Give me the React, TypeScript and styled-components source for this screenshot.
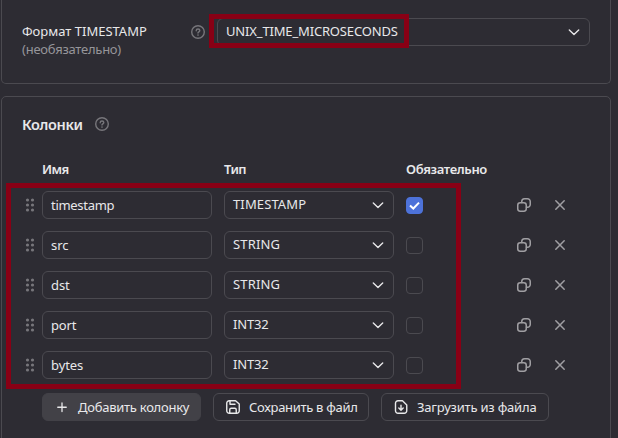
import React from "react";
import styled, { createGlobalStyle } from "styled-components";

const GlobalStyle = createGlobalStyle`
  *, *::before, *::after { box-sizing: border-box; }
  html, body { margin: 0; background: #2d2c33; overflow: hidden; }
  body { font-family: "Noto Sans", "Open Sans", sans-serif; font-size: 13px; line-height: 18px; color: #e8e8ea; }
  svg { display: block; flex: none; }
`;

const Page = styled.main`
  position: relative;
  width: 618px;
  height: 438px;
  overflow: hidden;
  padding-left: 1px;
  display: flex;
  flex-direction: column;
  gap: 12px;
`;

const Panel = styled.section<{ $place: "top" | "bottom" }>`
  width: 610px;
  flex: none;
  border: 1px solid #4b4a50;
  ${(p) =>
    p.$place === "top"
      ? "height: 84px; border-top: 0; border-radius: 0 0 5px 5px; padding: 18px 20px 0;"
      : "height: 350px; border-radius: 5px; padding: 18px 20px 0;"}
`;

const FormatRow = styled.div`
  display: flex;
  align-items: flex-start;
`;

const FieldLabel = styled.div`
  width: 168px;
  padding-top: 4px;
  white-space: nowrap;
`;

const Muted = styled.div`
  color: #96959a;
`;

const HelpSlot = styled.span`
  width: 27px;
  padding-top: 6px;
  color: #77767b;
`;

const Text = styled.span<{ $track?: number }>`
  letter-spacing: ${(p) => p.$track ?? 0}px;
  white-space: nowrap;
`;

const SelectBox = styled.button<{ $width: number }>`
  width: ${(p) => p.$width}px;
  height: 28px;
  padding: 0 7px 0 8px;
  display: flex;
  align-items: center;
  justify-content: space-between;
  border: 1px solid #4b4a50;
  border-radius: 6px;
  background: transparent;
  color: inherit;
  font: inherit;
  line-height: 24px;

  ${Text} { margin-bottom: 2px; }
`;

const Title = styled.h2`
  margin: 0;
  display: flex;
  height: 18px;
  gap: 11px;
  align-items: center;
  font-size: 14.5px;
  font-weight: 600;
  line-height: 18px;
  svg { color: #77767b; }
`;

const HeaderRow = styled.div`
  display: grid;
  grid-template-columns: 170px 170px 100px;
  column-gap: 12px;
  margin: 27px 0 0 20px;
  height: 18px;
  font-weight: 600;
`;

const Rows = styled.div`
  margin-top: 13px;
  display: flex;
  flex-direction: column;
  gap: 12px;
`;

const Row = styled.div`
  display: grid;
  grid-template-columns: 20px 182px 182px 110px 36px 16px;
  height: 28px;
  align-items: center;
`;

const NameField = styled.div`
  width: 170px;
  height: 28px;
  border: 1px solid #4b4a50;
  border-radius: 6px;
  padding: 1px 8px 0;
  line-height: 25px;
`;

const Check = styled.span<{ $on: boolean }>`
  width: 17px;
  height: 17px;
  border-radius: 4px;
  border: 1px solid ${(p) => (p.$on ? "#4d72d9" : "#4b4a50")};
  background: ${(p) => (p.$on ? "#4d72d9" : "transparent")};
  display: grid;
  place-items: center;
`;

const IconButton = styled.button`
  width: 16px;
  height: 16px;
  padding: 0;
  border: 0;
  background: none;
  color: #a09fa3;
`;

const Actions = styled.div`
  display: flex;
  gap: 12px;
  margin: 14px 0 0 20px;
`;

const Action = styled.button<{ $width: number; $filled?: boolean }>`
  width: ${(p) => p.$width}px;
  height: 28px;
  padding: 0 0 0 11px;
  display: flex;
  align-items: center;
  gap: 8px;
  border: 1px solid ${(p) => (p.$filled ? "#424147" : "#4b4a50")};
  border-radius: 6px;
  background: ${(p) => (p.$filled ? "#424147" : "transparent")};
  color: inherit;
  font: inherit;
`;

const Highlight = styled.div<{ $x: number; $y: number; $w: number; $h: number }>`
  position: absolute;
  left: ${(p) => p.$x}px;
  top: ${(p) => p.$y}px;
  width: ${(p) => p.$w}px;
  height: ${(p) => p.$h}px;
  border: 5px solid #880015;
  pointer-events: none;
`;

const stroke = { fill: "none", stroke: "currentColor", strokeLinecap: "round", strokeLinejoin: "round" } as const;

const Help = () => (
  <svg width="16" height="16" viewBox="0 0 16 16" {...stroke} strokeWidth="1.4">
    <circle cx="8" cy="8" r="6.3" />
    <path d="M6.2 6.7c0-1 .8-1.7 1.8-1.7s1.8.7 1.8 1.6C9.8 7.8 8 7.8 8 9" />
    <path d="M8 11v.1" strokeWidth="1.6" />
  </svg>
);
const Chevron = () => (
  <svg width="16" height="16" viewBox="0 0 16 16" {...stroke} strokeWidth="1.4">
    <path d="M3.3 6 8 10.400 12.700 6" />
  </svg>
);
const Grip = () => (
  <svg width="16" height="16" viewBox="0 0 16 16" fill="#77767b">
    {[3, 8, 13].map((y) => [5.5, 10.5].map((x) => <circle key={`${x}-${y}`} cx={x} cy={y} r="1.6" />))}
  </svg>
);
const Tick = () => (
  <svg width="11" height="11" viewBox="0 0 11 11" {...stroke} stroke="#fff" strokeWidth="2" strokeLinecap="butt" strokeLinejoin="miter">
    <path d="M1 5.5 4.3 8.5 10 2.6" />
  </svg>
);
const Copy = () => (
  <svg width="16" height="16" viewBox="0 0 16 16" {...stroke} strokeWidth="1.5">
    <rect x="1.75" y="5.75" width="8.5" height="8.5" rx="2.4" />
    <path d="M5.75 5.5V4.500a2.750 2.750 0 0 1 2.750-2.750h3a2.750 2.750 0 0 1 2.750 2.750v3a2.750 2.750 0 0 1-2.750 2.750H10.500" />
  </svg>
);
const Cross = () => (
  <svg width="16" height="16" viewBox="0 0 16 16" {...stroke} strokeWidth="1.5">
    <path d="m3.8 3.8 8.400 8.400m0-8.400-8.400 8.400" />
  </svg>
);
const Plus = () => (
  <svg width="16" height="16" viewBox="0 0 16 16" {...stroke} strokeWidth="1.3">
    <path d="M8 4v8.500M3.750 8.250h8.500" />
  </svg>
);
const Save = () => (
  <svg width="16" height="16" viewBox="0 0 16 16" {...stroke} strokeWidth="1.4">
    <path d="M4.25 1.75h6.3L14.25 5v6.75a2.5 2.5 0 0 1-2.5 2.5h-7.5a2.5 2.5 0 0 1-2.500-2.500v-7.500a2.500 2.500 0 0 1 2.500-2.500Z" />
    <path d="M5 2v3.250h5M4.750 14V10.750a1.500 1.500 0 0 1 1.500-1.500h3.500a1.500 1.500 0 0 1 1.500 1.500V14" />
  </svg>
);
const FileDown = () => (
  <svg width="16" height="16" viewBox="0 0 16 16" {...stroke} strokeWidth="1.4">
    <path d="M5 1.750h4.500L13.750 6v5.750a2.500 2.500 0 0 1-2.500 2.500h-6.250a2.500 2.500 0 0 1-2.500-2.500v-7.500A2.500 2.500 0 0 1 5 1.750Z" />
    <path d="M8 6.200v5M5.800 9 8 11.200 10.200 9" />
  </svg>
);

const Select = ({ value, width, track }: { value: string; width: number; track?: number }) => (
  <SelectBox $width={width}>
    <Text $track={track}>{value}</Text>
    <Chevron />
  </SelectBox>
);

const columns = [
  { name: "timestamp", type: "TIMESTAMP", required: true, nameTrack: -0.3, typeTrack: 0.12 },
  { name: "src", type: "STRING", required: false, nameTrack: -0.1, typeTrack: 0.15 },
  { name: "dst", type: "STRING", required: false, nameTrack: -0.1, typeTrack: 0.15 },
  { name: "port", type: "INT32", required: false, nameTrack: -0.2, typeTrack: -0.2 },
  { name: "bytes", type: "INT32", required: false, nameTrack: -0.1, typeTrack: -0.2 },
];

export default function App() {
  return (
    <>
      <GlobalStyle />
      <Page>
        <Panel $place="top">
          <FormatRow>
            <FieldLabel>
              <Text>Формат TIMESTAMP</Text>
              <Muted><Text $track={-0.25}>(необязательно)</Text></Muted>
            </FieldLabel>
            <HelpSlot><Help /></HelpSlot>
            <Select value="UNIX_TIME_MICROSECONDS" width={373} track={-0.16} />
          </FormatRow>
        </Panel>
        <Panel $place="bottom">
          <Title><Text $track={-0.35}>Колонки</Text><Help /></Title>
          <HeaderRow>
            <Text $track={-0.6}>Имя</Text>
            <Text $track={-0.6}>Тип</Text>
            <Text $track={-0.36}>Обязательно</Text>
          </HeaderRow>
          <Rows>
            {columns.map((c) => (
              <Row key={c.name}>
                <Grip />
                <NameField><Text $track={c.nameTrack}>{c.name}</Text></NameField>
                <Select value={c.type} width={170} track={c.typeTrack} />
                <Check $on={c.required}>{c.required && <Tick />}</Check>
                <IconButton aria-label="Copy"><Copy /></IconButton>
                <IconButton aria-label="Remove"><Cross /></IconButton>
              </Row>
            ))}
          </Rows>
          <Actions>
            <Action $width={159} $filled><Plus /><Text $track={-0.26}>Добавить колонку</Text></Action>
            <Action $width={156}><Save /><Text $track={-0.3}>Сохранить в файл</Text></Action>
            <Action $width={168}><FileDown /><Text $track={-0.2}>Загрузить из файла</Text></Action>
          </Actions>
        </Panel>
        <Highlight $x={209} $y={14} $w={200} $h={34} />
        <Highlight $x={6} $y={183} $w={455} $h={206} />
      </Page>
    </>
  );
}
